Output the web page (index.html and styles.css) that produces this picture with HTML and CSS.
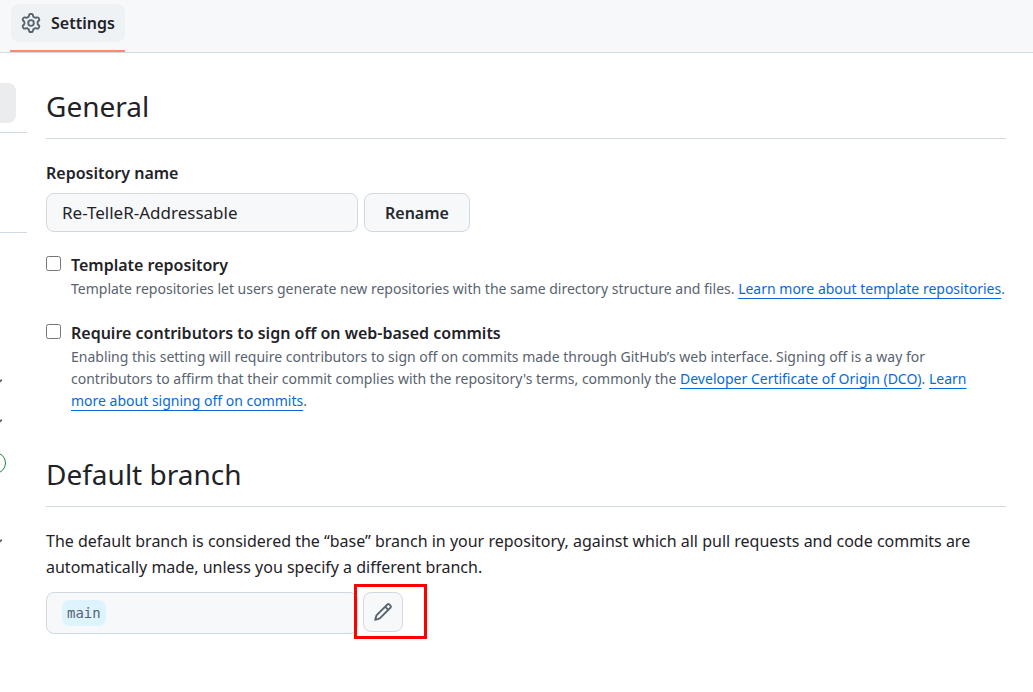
FILE: index.html
```html
<!DOCTYPE html>
<html lang="en">
<head>
<meta charset="utf-8">
<meta name="viewport" content="width=device-width, initial-scale=1">
<title>Settings</title>
<link rel="stylesheet" href="styles.css">
</head>
<body>
<header class="topbar">
  <a class="tab" href="#settings" aria-current="page">
    <span class="tab-inner">
      <svg class="icon" viewBox="0 0 16 16" aria-hidden="true"><path d="M8 0a8.2 8.2 0 0 1 .701.031C9.444.095 9.99.645 10.16 1.29l.288 1.107c.018.066.079.158.212.224.231.114.454.243.668.386.123.082.233.09.299.071l1.103-.303c.644-.176 1.392.021 1.82.63.27.385.506.792.704 1.218.315.675.111 1.422-.364 1.891l-.814.806c-.049.048-.098.147-.088.294.016.257.016.515 0 .772-.01.147.038.246.088.294l.814.806c.475.469.679 1.216.364 1.891a7.977 7.977 0 0 1-.704 1.217c-.428.61-1.176.807-1.82.63l-1.102-.302c-.067-.019-.177-.011-.3.071a5.909 5.909 0 0 1-.668.386c-.133.066-.194.158-.211.224l-.29 1.106c-.168.646-.715 1.196-1.458 1.26a8.006 8.006 0 0 1-1.402 0c-.743-.064-1.289-.614-1.458-1.26l-.289-1.106c-.018-.066-.079-.158-.212-.224a5.738 5.738 0 0 1-.668-.386c-.123-.082-.233-.09-.299-.071l-1.103.303c-.644.176-1.392-.021-1.82-.63a8.12 8.12 0 0 1-.704-1.218c-.315-.675-.111-1.422.363-1.891l.815-.806c.05-.048.098-.147.088-.294a6.214 6.214 0 0 1 0-.772c.01-.147-.038-.246-.088-.294l-.815-.806C.635 6.045.431 5.298.746 4.623a7.92 7.92 0 0 1 .704-1.217c.428-.61 1.176-.807 1.82-.63l1.102.302c.067.019.177.011.3-.071.214-.143.437-.272.668-.386.133-.066.194-.158.211-.224l.29-1.106C6.009.645 6.556.095 7.299.03 7.53.01 7.764 0 8 0Zm-.571 1.525c-.036.003-.108.036-.137.146l-.289 1.105c-.147.561-.549.967-.998 1.189-.173.086-.34.183-.5.29-.417.278-.97.423-1.529.27l-1.103-.303c-.109-.03-.175.016-.195.045-.22.312-.412.644-.573.99-.014.031-.021.11.059.19l.815.806c.411.406.562.957.53 1.456a4.709 4.709 0 0 0 0 .582c.032.499-.119 1.05-.53 1.456l-.815.806c-.081.08-.073.159-.059.19.162.346.353.677.573.989.02.03.085.076.195.046l1.102-.303c.56-.153 1.113-.008 1.53.27.161.107.328.204.501.29.447.222.85.629.997 1.189l.289 1.105c.029.109.101.143.137.146a6.6 6.6 0 0 0 1.142 0c.036-.003.108-.036.137-.146l.289-1.105c.147-.561.549-.967.998-1.189.173-.086.34-.183.5-.29.417-.278.97-.423 1.529-.27l1.103.303c.109.029.175-.016.195-.045.22-.313.411-.644.573-.99.014-.031.021-.11-.059-.19l-.815-.806c-.411-.406-.562-.957-.53-1.456a4.709 4.709 0 0 0 0-.582c-.032-.499.119-1.05.53-1.456l.815-.806c.081-.08.073-.159.059-.19a6.464 6.464 0 0 0-.573-.989c-.02-.03-.085-.076-.195-.046l-1.102.303c-.56.153-1.113.008-1.53-.27a4.44 4.44 0 0 0-.501-.29c-.447-.222-.85-.629-.997-1.189l-.289-1.105c-.029-.11-.101-.143-.137-.146a6.6 6.6 0 0 0-1.142 0ZM11 8a3 3 0 1 1-6 0 3 3 0 0 1 6 0ZM9.5 8a1.5 1.5 0 1 0-3.001.001A1.5 1.5 0 0 0 9.5 8Z"/></svg>
      <span>Settings</span>
    </span>
  </a>
</header>
<div class="page">
  <nav class="sidebar" aria-label="Settings sections">
    <div class="group"><div class="row current"></div></div>
    <div class="group access"></div>
    <div class="group code">
      <div class="row"><svg class="icon" viewBox="0 0 16 16" aria-hidden="true"><path d="M12.78 5.22a.749.749 0 0 1 0 1.06l-4.25 4.25a.749.749 0 0 1-1.06 0L3.22 6.28a.749.749 0 1 1 1.06-1.06L8 8.939l3.72-3.719a.749.749 0 0 1 1.06 0Z"/></svg></div>
      <div class="row"><svg class="icon" viewBox="0 0 16 16" aria-hidden="true"><path d="M12.78 5.22a.749.749 0 0 1 0 1.06l-4.25 4.25a.749.749 0 0 1-1.06 0L3.22 6.28a.749.749 0 1 1 1.06-1.06L8 8.939l3.72-3.719a.749.749 0 0 1 1.06 0Z"/></svg></div>
      <div class="row"><span class="pill"></span></div>
      <div class="row"></div>
      <div class="row"><svg class="icon" viewBox="0 0 16 16" aria-hidden="true"><path d="M12.78 5.22a.749.749 0 0 1 0 1.06l-4.25 4.25a.749.749 0 0 1-1.06 0L3.22 6.28a.749.749 0 1 1 1.06-1.06L8 8.939l3.72-3.719a.749.749 0 0 1 1.06 0Z"/></svg></div>
    </div>
  </nav>
  <main class="content">
    <h2 class="heading">General</h2>
    <form class="rename">
      <label class="label" for="repo">Repository name</label>
      <div class="controls">
        <input class="field" id="repo" type="text" value="Re-TelleR-Addressable">
        <button class="button" type="button">Rename</button>
      </div>
    </form>
    <div class="option">
      <input class="check" id="template" type="checkbox">
      <div>
        <label class="label" for="template">Template repository</label>
        <p class="note">Template repositories let users generate new repositories with the same directory structure and files. <a class="link" href="#template-docs">Learn more about template repositories</a>.</p>
      </div>
    </div>
    <div class="option">
      <input class="check" id="signoff" type="checkbox">
      <div>
        <label class="label" for="signoff">Require contributors to sign off on web-based commits</label>
        <p class="note">Enabling this setting will require contributors to sign off on commits made through GitHub’s web interface. Signing off is a way for contributors to affirm that their commit complies with the repository's terms, commonly the <a class="link" href="#dco">Developer Certificate of Origin (DCO)</a>. <a class="link" href="#signoff-docs">Learn more&nbsp;about signing off on commits</a>.</p>
      </div>
    </div>
    <h2 class="heading branch-heading">Default branch</h2>
    <p class="text">The default branch is considered the “base” branch in your repository, against which all pull requests and code commits are automatically made, unless you specify a different branch.</p>
    <div class="branch">
      <div class="branch-box"><code class="branch-name">main</code></div>
      <div class="edit">
        <button class="button edit-button" type="button" aria-label="Rename branch"><svg class="icon" viewBox="0 0 16 16" aria-hidden="true"><path d="M11.013 1.427a1.75 1.75 0 0 1 2.474 0l1.086 1.086a1.75 1.75 0 0 1 0 2.474l-8.61 8.61c-.21.21-.47.364-.756.445l-3.251.93a.75.75 0 0 1-.927-.928l.929-3.25c.081-.286.235-.547.445-.758l8.61-8.61Zm.176 4.823L9.75 4.81l-6.286 6.287a.253.253 0 0 0-.064.108l-.558 1.953 1.953-.558a.253.253 0 0 0 .108-.064Zm1.238-3.763a.25.25 0 0 0-.354 0L10.811 3.75l1.439 1.44 1.263-1.263a.25.25 0 0 0 0-.354Z"/></svg></button>
        <span class="marker"></span>
      </div>
    </div>
  </main>
</div>
</body>
</html>
```
FILE: styles.css
```css
* { box-sizing: border-box; }
body {
  margin: 0;
  background: #fff;
  color: #1f2328;
  font: 16px/26px "Noto Sans", "Open Sans", sans-serif;
}
h2, p { margin: 0; }
.icon { width: 20px; height: 20px; fill: #59636e; flex: none; }
.topbar {
  display: flex;
  padding: 4px 10px 0;
  background: #f6f8fa;
  border-bottom: 1px solid #d1d9e0;
}
.tab {
  padding: 0 0 8px 1px;
  border-bottom: 2px solid #fd8c73;
  color: inherit;
  font-weight: 600;
  text-decoration: none;
}
.tab-inner {
  display: flex;
  align-items: center;
  gap: 10px;
  height: 38px;
  padding: 0 10px;
  border-radius: 8px;
  background: #eff2f5;
}
.page { display: flex; gap: 19px; padding: 30px 27px 40px 0; }
.sidebar { flex: none; width: 27px; overflow: hidden; }
.group { border-bottom: 1px solid #d1d9e0; padding-bottom: 9px; }
.row { display: flex; align-items: center; height: 40px; }
.row .icon { margin-left: -14px; }
.current { width: 16px; border-radius: 0 8px 8px 0; background: #ebecee; }
.access { height: 100px; }
.code { border: 0; padding-top: 130px; }
.pill { width: 40px; height: 22px; margin-left: -34px; border: 1px solid #1f883d; border-radius: 11px; flex: none; }
.content { flex: 1; min-width: 0; }
.heading {
  padding: 3px 0 12px;
  border-bottom: 1px solid #d1d9e0;
  font-size: 28px;
  line-height: 40px;
  font-weight: 400;
}
.label { font-weight: 600; }
.rename { padding: 21px 0 20px; }
.controls { display: flex; gap: 6px; padding-top: 7px; }
.field {
  width: 312px;
  height: 39px;
  padding: 0 15px;
  border: 1px solid #d1d9e0;
  border-radius: 8px;
  background: #f6f8fa;
  color: inherit;
  font: inherit;
  font-size: 17px;
}
.button {
  height: 39px;
  padding: 0 20px;
  border: 1px solid #d1d9e0;
  border-radius: 8px;
  background: #f6f8fa;
  color: #25292e;
  font: inherit;
  font-weight: 600;
}
.option { display: flex; gap: 10px; padding-bottom: 20px; }
.check { width: 15px; height: 15px; margin: 4px 0 0; flex: none; }
.option .label { display: block; }
.note { color: #59636e; font-size: 14px; line-height: 22px; }
.link { color: #0969da; text-decoration: underline; text-underline-offset: 4px; }
.branch-heading { padding-top: 22px; }
.text { padding: 21px 0 12px; }
.branch { display: flex; }
.branch-box {
  display: flex;
  align-items: center;
  width: 312px;
  height: 42px;
  padding: 0 15px;
  border: 1px solid #d1d9e0;
  border-radius: 8px;
  background: #f6f8fa;
}
.branch-name {
  padding: 2px 5px;
  border-radius: 8px;
  background: #ddf4ff;
  color: #59636e;
  font: 14px/22px "DejaVu Sans Mono", monospace;
}
.edit { position: relative; padding-left: 5px; }
.edit-button { display: flex; align-items: center; justify-content: center; width: 40px; height: 40px; padding: 0; }
.marker { position: absolute; left: -4px; top: -8px; width: 73px; height: 55px; border: 3px solid #f00; }
```
